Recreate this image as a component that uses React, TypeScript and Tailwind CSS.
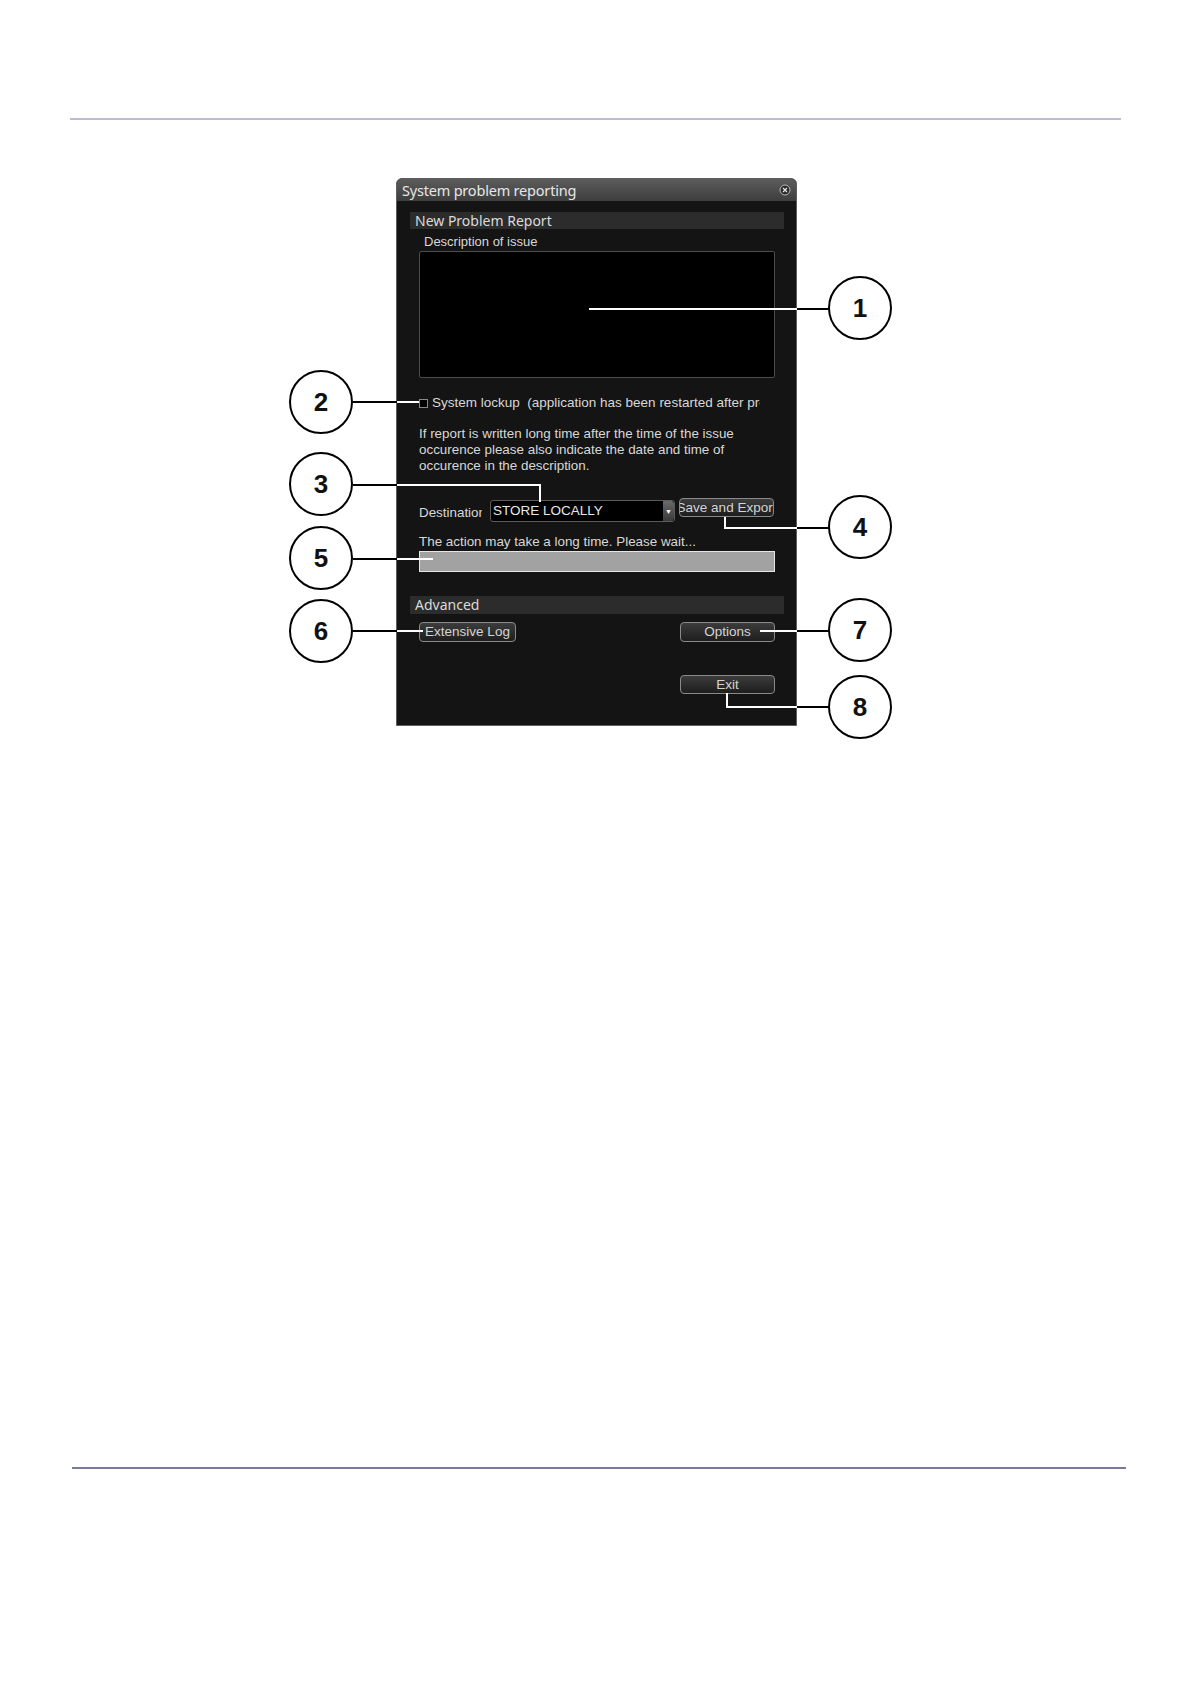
import React from "react";

const arial = { fontFamily: '"Liberation Sans", Arial, sans-serif' };
const ui = { fontFamily: '"Noto Sans", "Open Sans", sans-serif' };

function Btn({ children, className = "" }: { children: React.ReactNode; className?: string }) {
  return (
    <div
      className={
        "flex items-center justify-center overflow-hidden whitespace-nowrap rounded-[4px] border border-[#8a8a8a] bg-gradient-to-b from-[#3c3c3c] to-[#1e1e1e] text-[13.5px] leading-none text-[#d4d4d4] " +
        className
      }
      style={arial}
    >
      {children}
    </div>
  );
}

type Callout = { n: number; cx: number; cy: number; black: [number, number, number, number][]; white: [number, number, number, number][] };

const callouts: Callout[] = [
  { n: 1, cx: 860, cy: 308, black: [[797, 309, 829, 309]], white: [[589, 309, 797, 309]] },
  { n: 2, cx: 321, cy: 402, black: [[353, 402, 397, 402]], white: [[397, 402, 419, 402]] },
  { n: 3, cx: 321, cy: 484, black: [[353, 485, 397, 485]], white: [[397, 485, 541, 485], [540, 484, 540, 502]] },
  { n: 4, cx: 860, cy: 527, black: [[797, 528, 829, 528]], white: [[724, 528, 797, 528], [725, 517, 725, 529]] },
  { n: 5, cx: 321, cy: 558, black: [[353, 559, 397, 559]], white: [[397, 559, 433, 559]] },
  { n: 6, cx: 321, cy: 631, black: [[353, 631, 397, 631]], white: [[397, 631, 423, 631]] },
  { n: 7, cx: 860, cy: 630, black: [[797, 631, 829, 631]], white: [[760, 631, 797, 631]] },
  { n: 8, cx: 860, cy: 707, black: [[797, 707, 829, 707]], white: [[726, 707, 797, 707], [727, 693, 727, 708]] },
];

export default function App() {
  return (
    <div className="relative flex h-[1684px] w-[1190px] flex-col bg-white">
      <div className="ml-[70px] mt-[118px] h-[2px] w-[1051px] bg-[#bcbcd4]" />

      {/* Figure: dialog */}
      <div className="mt-[58px] flex">
        <div className="ml-[396px] flex h-[548px] w-[401px] flex-col rounded-t-[6px] border border-[#5e5e5e] bg-[#141414]">
          {/* title bar */}
          <div className="flex h-[22px] items-center justify-between rounded-t-[5px] bg-gradient-to-b from-[#5c5c5c] to-[#3e3e3e] pl-[5px] pr-[5px]">
            <span className="text-[14.5px] leading-none tracking-[-0.2px] text-[#e6e6e6]" style={ui}>
              System problem reporting
            </span>
            <svg width="12" height="12" viewBox="0 0 12 12">
              <circle cx="6" cy="6" r="5" fill="#2a2a2a" stroke="#b8b8b8" strokeWidth="1" />
              <path d="M4 4 L8 8 M8 4 L4 8" stroke="#e8e8e8" strokeWidth="1.2" />
            </svg>
          </div>

          {/* body */}
          <div className="flex flex-1 flex-col pl-[13px] pr-[12px] pt-[11px]">
            <div className="flex h-[17px] items-center bg-[#2c2c2c] pl-[5px] text-[14px] leading-none text-[#dadada]" style={ui}>
              New Problem Report
            </div>
            <div className="flex flex-col px-[9px]">
              <div className="ml-[5px] mt-[5px] h-[16px] text-[13px] leading-[16px] text-[#d8d8d8]" style={arial}>
                Description of issue
              </div>
              <div className="mt-[1px] h-[127px] rounded-[2px] border border-[#4c4c4c] bg-black" />
              <div className="mt-[17px] flex h-[16px] items-center overflow-hidden whitespace-nowrap text-[13.5px] leading-[16px] text-[#d8d8d8]" style={arial}>
                <span className="mr-[4px] h-[9px] w-[9px] shrink-0 border border-[#8a8a8a] bg-black" />
                <span className="w-[328px] overflow-hidden">System lockup&nbsp; (application has been restarted after problem)</span>
              </div>
              <div className="mt-[15px] text-[13.4px] leading-[16px] text-[#d8d8d8]" style={arial}>
                If report is written long time after the time of the issue
                <br />
                occurence please also indicate the date and time of
                <br />
                occurence in the description.
              </div>
              <div className="mt-[24px] flex h-[24px] items-start">
                <span className="mt-[7px] w-[63px] overflow-hidden whitespace-nowrap text-[13.4px] leading-[16px] text-[#d8d8d8]" style={arial}>
                  Destination
                </span>
                <div className="ml-[8px] mt-[2px] flex h-[22px] w-[185px] overflow-hidden rounded-[3px] border border-[#5a5a5a] bg-black">
                  <span className="flex-1 pl-[2px] text-[13.5px] leading-[20px] text-[#e8e8e8]" style={arial}>
                    STORE LOCALLY
                  </span>
                  <span className="flex w-[11px] items-center justify-center rounded-r-[3px] bg-gradient-to-b from-[#6a6a6a] to-[#3a3a3a] text-[7px] leading-none text-white">
                    ▼
                  </span>
                </div>
                <Btn className="ml-[4px] h-[19px] w-[95px]">Save and Export</Btn>
              </div>
              <div className="mt-[12px] h-[16px] whitespace-nowrap text-[13.4px] leading-[16px] text-[#d8d8d8]" style={arial}>
                The action may take a long time. Please wait...
              </div>
              <div className="mt-[1px] h-[21px] border border-[#e6e6e6] bg-[#a2a2a2]" />
            </div>

            <div className="mt-[24px] flex h-[18px] items-center bg-[#2c2c2c] pl-[5px] text-[14px] leading-none text-[#dadada]" style={ui}>
              Advanced
            </div>
            <div className="flex flex-col px-[9px]">
              <div className="mt-[8px] flex items-center justify-between">
                <Btn className="h-[20px] w-[97px]">Extensive Log</Btn>
                <Btn className="h-[20px] w-[95px]">Options</Btn>
              </div>
              <div className="mt-[33px] flex justify-end">
                <Btn className="h-[19px] w-[95px]">Exit</Btn>
              </div>
            </div>
          </div>
        </div>
      </div>

      <div className="ml-[72px] mt-auto mb-[215px] h-[2px] w-[1054px] bg-[#7a7a9a]" />

      {/* callout overlay */}
      <svg className="pointer-events-none absolute left-0 top-0" width={1190} height={1684}>
        {callouts.map((c) => (
          <g key={c.n}>
            {c.black.map((l, i) => (
              <line key={"b" + i} x1={l[0]} y1={l[1]} x2={l[2]} y2={l[3]} stroke="#000" strokeWidth={2} />
            ))}
            {c.white.map((l, i) => (
              <line key={"w" + i} x1={l[0]} y1={l[1]} x2={l[2]} y2={l[3]} stroke="#fff" strokeWidth={2} />
            ))}
            <circle cx={c.cx} cy={c.cy} r={31} fill="#fff" stroke="#000" strokeWidth={2} />
            <text
              x={c.cx}
              y={c.cy + 9}
              textAnchor="middle"
              fontFamily='"Liberation Sans", Arial, sans-serif'
              fontWeight={700}
              fontSize={26}
              fill="#111"
            >
              {c.n}
            </text>
          </g>
        ))}
      </svg>
    </div>
  );
}
